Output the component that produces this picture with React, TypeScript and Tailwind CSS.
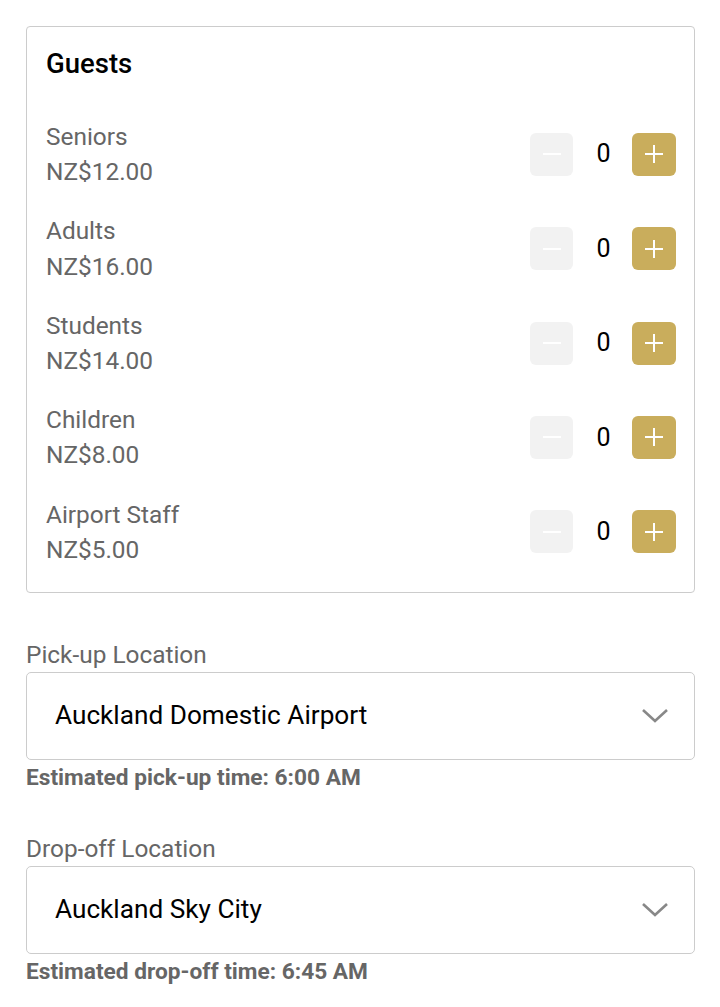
import React from "react";

const guests = [
  { name: "Seniors", price: "NZ$12.00" },
  { name: "Adults", price: "NZ$16.00" },
  { name: "Students", price: "NZ$14.00" },
  { name: "Children", price: "NZ$8.00" },
  { name: "Airport Staff", price: "NZ$5.00" },
];

const Chevron = () => (
  <svg width="28" height="16" viewBox="0 0 28 16" fill="none">
    <path d="M2 2L14 13L26 2" stroke="#888" strokeWidth="2.6" />
  </svg>
);

const GuestRow = ({ name, price }: { name: string; price: string }) => {
  return (
    <div className="flex items-center justify-between py-[12px]">
      <div className="text-[24.4px] leading-[35.2px] text-[#666]">
        <div>{name}</div>
        <div>{price}</div>
      </div>
      <div className="flex items-center">
        <button className="w-[43px] h-[43px] rounded-[6px] bg-[#f2f2f2] flex items-center justify-center">
          <svg width="22" height="22" viewBox="0 0 22 22">
            <path d="M2 11H20" stroke="#fff" strokeWidth="2" />
          </svg>
        </button>
        <div className="w-[59px] pl-[2px] text-center text-[25px] text-black">0</div>
        <button className="w-[44px] h-[43px] rounded-[6px] bg-[#c9ad5c] flex items-center justify-center">
          <svg width="22" height="22" viewBox="0 0 22 22">
            <path d="M2 11H20M11 2V20" stroke="#fff" strokeWidth="2" />
          </svg>
        </button>
      </div>
    </div>
  );
};

const LocationSelect = ({ label, value, note }: { label: string; value: string; note: string }) => {
  return (
    <div>
      <div className="text-[24.4px] leading-[30px] text-[#666] mb-[2px]">{label}</div>
      <div className="h-[88px] border border-[#ccc] rounded-[5px] flex items-center justify-between pl-[28px] pr-[25px]">
        <span className="text-[26.2px] text-black">{value}</span>
        <Chevron />
      </div>
      <div className="mt-[5px] text-[22.7px] leading-[26px] font-bold text-[#666]">{note}</div>
    </div>
  );
};

const App = () => {
  return (
    <div className="w-[720px] pl-[26px] pr-[25px] pt-[26px] bg-white font-['Roboto',sans-serif]">
      <div className="border border-[#ccc] rounded-[4px] pl-[19px] pr-[18px] pt-[20px] pb-[13px]">
        <h2 className="text-[27.5px] leading-[34px] font-medium text-black mb-[26px]">Guests</h2>
        {guests.map((g) => (
          <GuestRow key={g.name} name={g.name} price={g.price} />
        ))}
      </div>
      <div className="mt-[47px] flex flex-col gap-[43px]">
        <LocationSelect
          label="Pick-up Location"
          value="Auckland Domestic Airport"
          note="Estimated pick-up time: 6:00 AM"
        />
        <LocationSelect
          label="Drop-off Location"
          value="Auckland Sky City"
          note="Estimated drop-off time: 6:45 AM"
        />
      </div>
    </div>
  );
};

export default App;
